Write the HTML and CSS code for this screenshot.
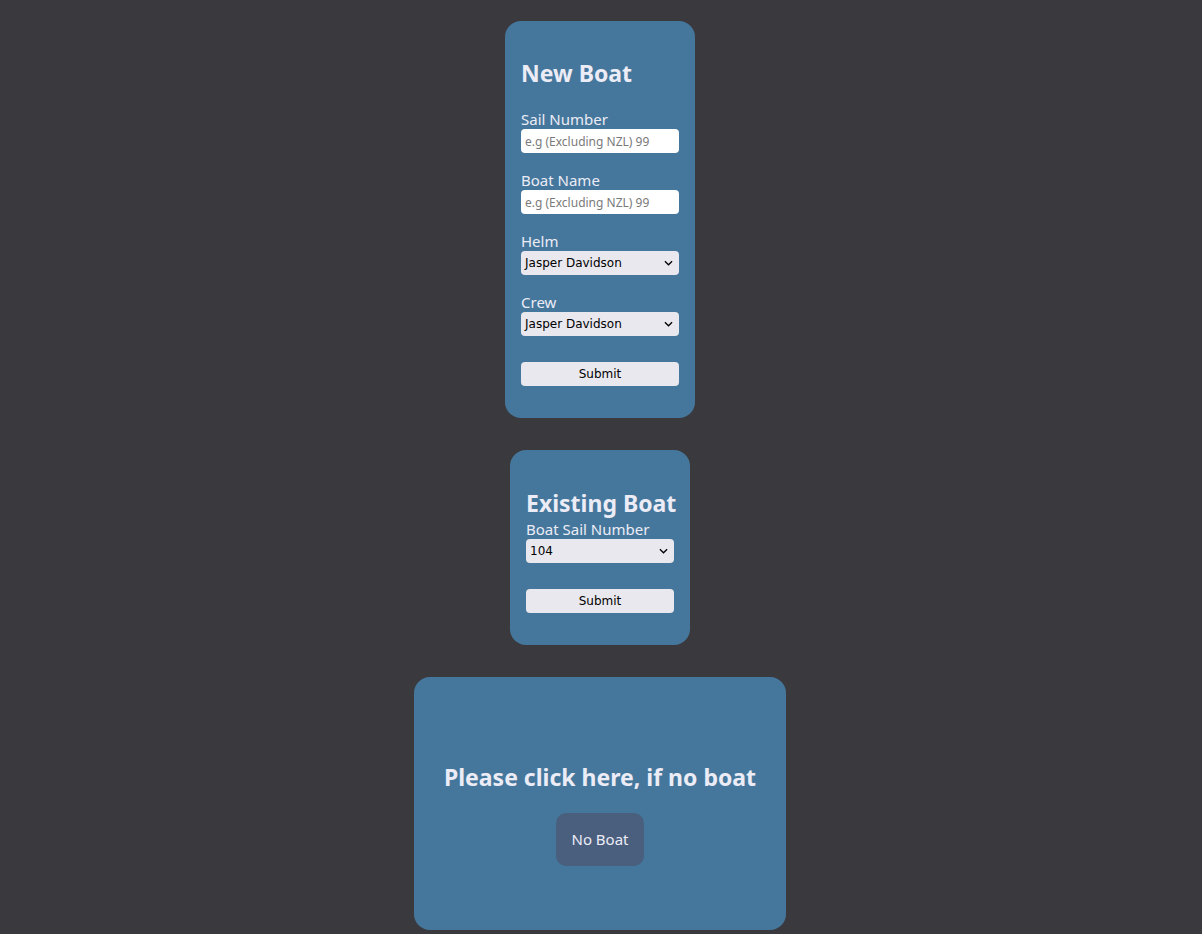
FILE: index.html
```html
<!DOCTYPE html>
<html>
<head>
<meta charset="utf-8">
<link rel="stylesheet" href="styles.css">
</head>
<body>
<main class="page">
  <section class="card card-new">
    <h2 class="title">New Boat</h2>
    <div class="field">
      <label class="label">Sail Number</label>
      <input class="text-input" type="text" placeholder="e.g (Excluding NZL) 99">
    </div>
    <div class="field">
      <label class="label">Boat Name</label>
      <input class="text-input" type="text" placeholder="e.g (Excluding NZL) 99">
    </div>
    <div class="field">
      <label class="label">Helm</label>
      <div class="select"><span>Jasper Davidson</span><svg class="chev" viewBox="0 0 10 6" width="9" height="6"><path d="M1 1 L5 5 L9 1" fill="none" stroke="#000" stroke-width="1.4"/></svg></div>
    </div>
    <div class="field">
      <label class="label">Crew</label>
      <div class="select"><span>Jasper Davidson</span><svg class="chev" viewBox="0 0 10 6" width="9" height="6"><path d="M1 1 L5 5 L9 1" fill="none" stroke="#000" stroke-width="1.4"/></svg></div>
    </div>
    <button class="submit">Submit</button>
  </section>

  <section class="card card-existing">
    <h2 class="title title-tight">Existing Boat</h2>
    <label class="label">Boat Sail Number</label>
    <div class="select"><span>104</span><svg class="chev" viewBox="0 0 10 6" width="9" height="6"><path d="M1 1 L5 5 L9 1" fill="none" stroke="#000" stroke-width="1.4"/></svg></div>
    <button class="submit">Submit</button>
  </section>

  <section class="card card-none">
    <h2 class="title">Please click here, if no boat</h2>
    <button class="no-boat">No Boat</button>
  </section>
</main>
</body>
</html>
```
FILE: styles.css
```css
html, body {
  margin: 0;
  padding: 0;
  background: #3a393e;
}
body {
  font-family: "Noto Sans", "Open Sans", sans-serif;
  color: #ececf6;
}
.page {
  display: flex;
  flex-direction: column;
  align-items: center;
  gap: 32px;
  padding-top: 21px;
  padding-bottom: 40px;
  padding-right: 2px;
}
.card {
  background: #45779c;
  border-radius: 16px;
  padding: 16px;
  display: flex;
  flex-direction: column;
  box-sizing: border-box;
}
.card-new { width: 190px; }
.card-existing { width: 180px; }
.card-none {
  width: 372px;
  padding: 64px 16px;
  align-items: center;
}
.title {
  font-size: 23px;
  font-weight: 700;
  line-height: 32px;
  margin: 20px 0;
  white-space: nowrap;
}
.title-tight { margin-bottom: 0; margin-top: 21px; }
.field {
  display: flex;
  flex-direction: column;
  margin-bottom: 17px;
}
.label {
  font-size: 15px;
  line-height: 20px;
  height: 20px;
}
.text-input {
  box-sizing: border-box;
  width: 100%;
  height: 24px;
  border: none;
  border-radius: 4px;
  background: #ffffff;
  padding: 0 4px;
  font-family: "Noto Sans", sans-serif;
  font-size: 12px;
  color: #000;
  outline: none;
}
.text-input::placeholder { color: #7a7a7a; }
.select {
  box-sizing: border-box;
  height: 24px;
  border-radius: 4px;
  background: #e9e8ee;
  display: flex;
  align-items: center;
  justify-content: space-between;
  padding: 0 6px 0 4px;
  font-family: "DejaVu Sans", sans-serif;
  font-size: 12px;
  color: #000;
}
.card-new .field:nth-of-type(4) { margin-bottom: 26px; }
.card-existing .select { margin-bottom: 26px; }
.submit {
  box-sizing: border-box;
  height: 24px;
  width: 100%;
  border: none;
  border-radius: 4px;
  background: #e9e8ee;
  font-family: "DejaVu Sans", sans-serif;
  font-size: 12px;
  color: #000;
  margin: 0 0 16px;
  padding: 0;
}
.card-none .title { margin: 20px 0; }
.no-boat {
  margin-top: 0;
  border: none;
  border-radius: 10px;
  background: #4a5f7e;
  color: #ececf6;
  font-family: "Noto Sans", sans-serif;
  font-size: 15px;
  line-height: 21px;
  padding: 16px 15px;
}
```
